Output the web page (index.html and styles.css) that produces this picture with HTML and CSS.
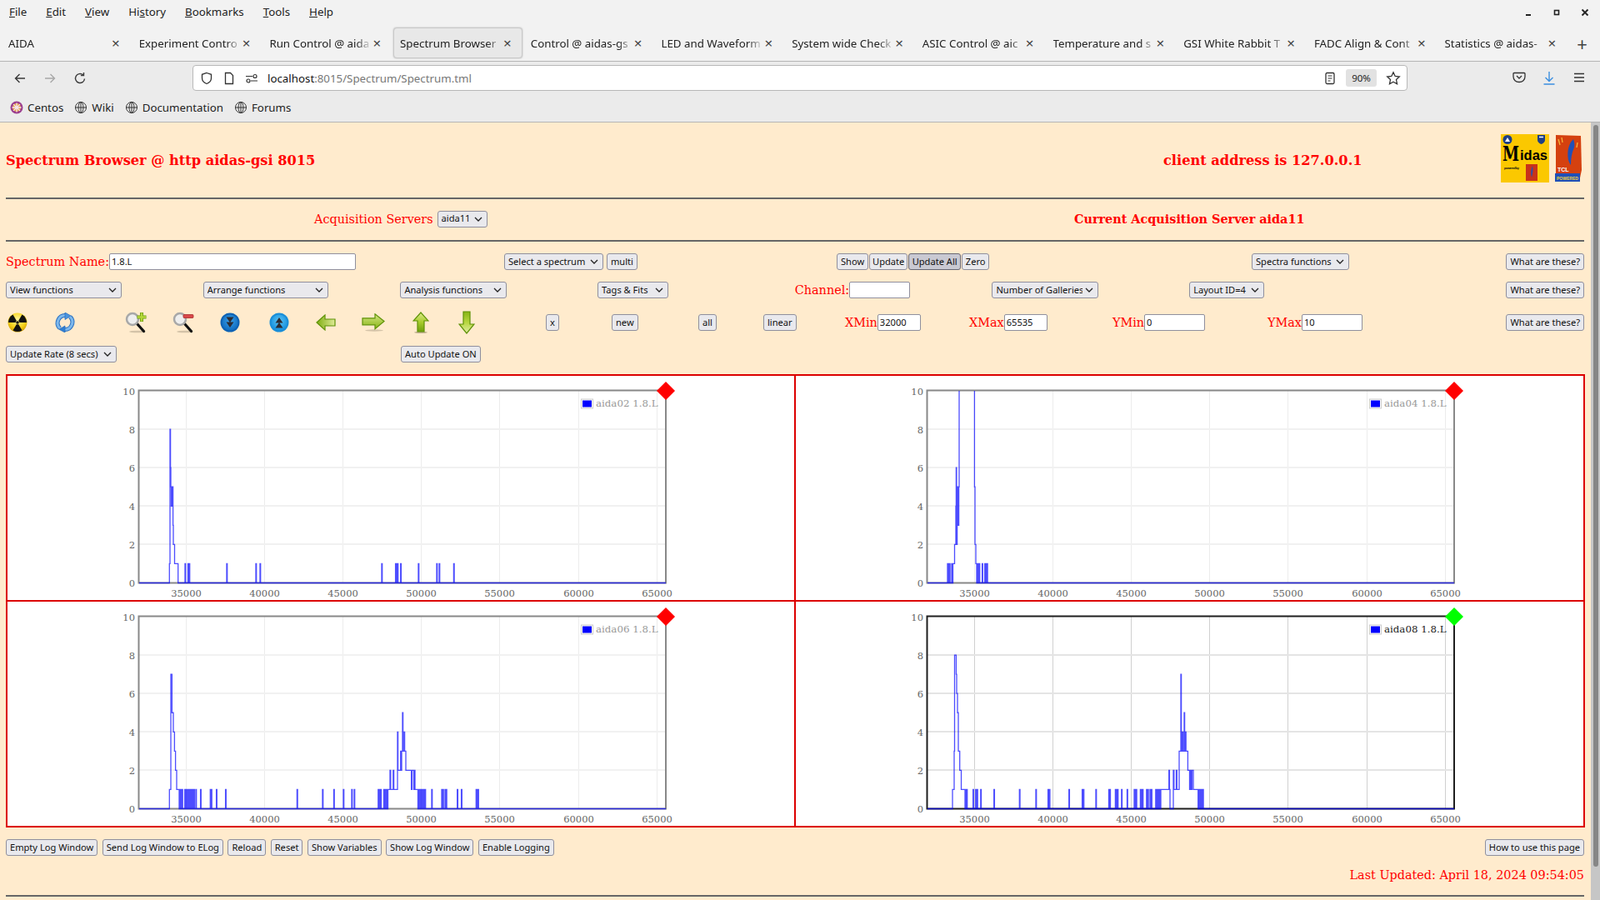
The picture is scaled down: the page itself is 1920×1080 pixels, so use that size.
FILE: index.html
```html
<!DOCTYPE html>
<html lang="en">
<head>
    <meta charset="UTF-8">
    <title>Spectrum Browser @ http aidas-gsi 8015</title>
    <link rel="stylesheet" href="styles.css">
</head>
<body>
    <svg class="defs" width="0" height="0">
        <defs>
            <radialGradient id="nukeGrad" cx="50%" cy="35%" r="70%">
                <stop offset="0" stop-color="#fff6a0"/>
                <stop offset="0.6" stop-color="#f7d21a"/>
                <stop offset="1" stop-color="#c79400"/>
            </radialGradient>
            <linearGradient id="greenGrad" x1="0" y1="0" x2="0" y2="1">
                <stop offset="0" stop-color="#dcea8a"/>
                <stop offset="0.5" stop-color="#a8cc2e"/>
                <stop offset="1" stop-color="#6fa00c"/>
            </linearGradient>
            <linearGradient id="greenDown" x1="0" y1="0" x2="0" y2="1">
                <stop offset="0" stop-color="#86b414"/>
                <stop offset="0.5" stop-color="#b8d640"/>
                <stop offset="1" stop-color="#e2eea4"/>
            </linearGradient>
            <linearGradient id="greenSide" x1="0" y1="0" x2="1" y2="0">
                <stop offset="0" stop-color="#7fae12"/>
                <stop offset="1" stop-color="#dfeb98"/>
            </linearGradient>
            <linearGradient id="greenSideR" x1="0" y1="0" x2="0" y2="1">
                <stop offset="0" stop-color="#d6e684"/>
                <stop offset="1" stop-color="#86b414"/>
            </linearGradient>
            <radialGradient id="blueDark" cx="50%" cy="40%" r="60%">
                <stop offset="0" stop-color="#3aa0e8"/>
                <stop offset="1" stop-color="#0f6cc0"/>
            </radialGradient>
            <radialGradient id="blueLight" cx="50%" cy="40%" r="60%">
                <stop offset="0" stop-color="#5cc4f4"/>
                <stop offset="1" stop-color="#1590de"/>
            </radialGradient>
        </defs>
    </svg>

    <div class="browser">
        <div class="menubar">
            <nav class="menu">
                <span><u>F</u>ile</span>
                <span><u>E</u>dit</span>
                <span><u>V</u>iew</span>
                <span>Hi<u>s</u>tory</span>
                <span><u>B</u>ookmarks</span>
                <span><u>T</u>ools</span>
                <span><u>H</u>elp</span>
            </nav>
            <div class="window-controls">
                <svg width="10" height="10" viewBox="0 0 10 10"><rect x="2" y="7" width="6" height="2" fill="#222"/></svg>
                <svg width="10" height="10" viewBox="0 0 10 10"><rect x="2.5" y="2.5" width="5" height="5" fill="none" stroke="#222" stroke-width="1.6"/></svg>
                <svg width="10" height="10" viewBox="0 0 10 10"><path d="M1.5 1.5l7 7M8.5 1.5l-7 7" stroke="#222" stroke-width="1.8"/></svg>
            </div>
        </div>

        <div class="tabbar">
            <div class="tab"><span class="tab-label">AIDA</span><span class="tab-close">×</span></div>
            <div class="tab"><span class="tab-label">Experiment Contro</span><span class="tab-close">×</span></div>
            <div class="tab"><span class="tab-label">Run Control @ aida</span><span class="tab-close">×</span></div>
            <div class="tab active"><span class="tab-label">Spectrum Browser</span><span class="tab-close">×</span></div>
            <div class="tab"><span class="tab-label">Control @ aidas-gs</span><span class="tab-close">×</span></div>
            <div class="tab"><span class="tab-label">LED and Waveform</span><span class="tab-close">×</span></div>
            <div class="tab"><span class="tab-label">System wide Check</span><span class="tab-close">×</span></div>
            <div class="tab"><span class="tab-label">ASIC Control @ aic</span><span class="tab-close">×</span></div>
            <div class="tab"><span class="tab-label">Temperature and s</span><span class="tab-close">×</span></div>
            <div class="tab"><span class="tab-label">GSI White Rabbit T</span><span class="tab-close">×</span></div>
            <div class="tab"><span class="tab-label">FADC Align &amp; Cont</span><span class="tab-close">×</span></div>
            <div class="tab"><span class="tab-label">Statistics @ aidas-</span><span class="tab-close">×</span></div>
            <span class="tab-new">+</span>
        </div>

        <div class="navbar">
            <div class="nav-buttons">
                <svg width="16" height="16" viewBox="0 0 16 16"><path d="M14 8H2.5M7.5 3l-5 5 5 5" fill="none" stroke="#3a3a3a" stroke-width="1.4"/></svg>
                <svg width="16" height="16" viewBox="0 0 16 16"><path d="M2 8h11.5M8.5 3l5 5-5 5" fill="none" stroke="#a8a8a8" stroke-width="1.4"/></svg>
                <svg width="16" height="16" viewBox="0 0 16 16"><path d="M13.5 8.5A5.5 5.5 0 1 1 11.6 3.8M12.5 1v3.6H8.9" fill="none" stroke="#3a3a3a" stroke-width="1.4"/></svg>
            </div>
            <div class="urlbar">
                <svg class="url-shield" width="16" height="16" viewBox="0 0 16 16"><path d="M8 1.5l5.5 1.8v4.4c0 3.2-2.4 5.6-5.5 6.8-3.1-1.2-5.5-3.6-5.5-6.8V3.300z" fill="none" stroke="#333" stroke-width="1.3"/></svg>
                <svg class="url-page" width="16" height="16" viewBox="0 0 16 16"><path d="M3.500 1.500h6l3 3v10h-9z" fill="none" stroke="#333" stroke-width="1.3"/></svg>
                <svg class="url-perm" width="16" height="16" viewBox="0 0 16 16"><path d="M1 5.500h8M7 11h8" stroke="#333" stroke-width="1.200"/><circle cx="12" cy="5.500" r="2" fill="none" stroke="#333" stroke-width="1.200"/><circle cx="4" cy="11" r="2" fill="none" stroke="#333" stroke-width="1.200"/></svg>
                <span class="url-text"><b>localhost</b>:8015/Spectrum/Spectrum.tml</span>
                <svg class="url-reader" width="14" height="16" viewBox="0 0 14 16"><rect x="2" y="1.500" width="10" height="13" rx="1.500" fill="none" stroke="#333" stroke-width="1.300"/><path d="M4.500 5h5M4.500 8h5M4.500 11h3" stroke="#333" stroke-width="1.200"/></svg>
                <span class="url-zoom">90%</span>
                <svg class="url-star" width="18" height="18" viewBox="0 0 18 18"><path d="M9 1.800l2.200 4.700 5.100.6-3.800 3.500 1 5.100L9 13.200l-4.500 2.500 1-5.100L1.700 7.100l5.100-.6z" fill="none" stroke="#333" stroke-width="1.300"/></svg>
            </div>
            <div class="nav-tools">
                <svg width="16" height="16" viewBox="0 0 16 16"><path d="M2 2.500h12a1 1 0 0 1 1 1v3.500c0 3.800-3 6.500-7 6.500S1 10.800 1 7V3.500a1 1 0 0 1 1-1z" fill="none" stroke="#333" stroke-width="1.300"/><path d="M5 6l3 3 3-3" fill="none" stroke="#333" stroke-width="1.300"/></svg>
                <svg width="16" height="18" viewBox="0 0 16 18"><path d="M8 1v11M3.500 8l4.500 4.500L12.500 8M1.500 16h13" fill="none" stroke="#3b8fe0" stroke-width="1.400"/></svg>
                <svg width="16" height="16" viewBox="0 0 16 16"><path d="M2 3.500h12M2 8h12M2 12.500h12" stroke="#333" stroke-width="1.500"/></svg>
            </div>
        </div>

        <div class="bookmarks">
            <span class="bookmark">
                <svg width="16" height="16" viewBox="0 0 16 16"><circle cx="8" cy="8" r="7.500" fill="#9c3f8e"/><circle cx="8" cy="8" r="5" fill="#e8a24a"/><path d="M8 2.500v11M2.500 8h11M4.100 4.100l7.800 7.800M11.900 4.100l-7.800 7.800" stroke="#f3e6ef" stroke-width="1.300"/></svg>
                Centos
            </span>
            <span class="bookmark">
                <svg class="globe" width="16" height="16" viewBox="0 0 16 16"><circle cx="8" cy="8" r="6.500"/><ellipse cx="8" cy="8" rx="3" ry="6.500"/><path d="M1.500 8h13M8 1.500v13"/></svg>
                Wiki
            </span>
            <span class="bookmark">
                <svg class="globe" width="16" height="16" viewBox="0 0 16 16"><circle cx="8" cy="8" r="6.500"/><ellipse cx="8" cy="8" rx="3" ry="6.500"/><path d="M1.500 8h13M8 1.500v13"/></svg>
                Documentation
            </span>
            <span class="bookmark">
                <svg class="globe" width="16" height="16" viewBox="0 0 16 16"><circle cx="8" cy="8" r="6.500"/><ellipse cx="8" cy="8" rx="3" ry="6.500"/><path d="M1.500 8h13M8 1.500v13"/></svg>
                Forums
            </span>
        </div>
    </div>

    <div class="viewport">
        <main class="page">
            <header class="page-header">
                <h3>Spectrum Browser @ http aidas-gsi 8015</h3>
                <h3>client address is 127.0.0.1</h3>
                <div class="logos">
                    <svg width="58" height="58" viewBox="0 0 58 58">
                        <rect width="58" height="58" fill="#fbc800"/>
                        <circle cx="8" cy="6.500" r="5.500" fill="#1d3f86"/>
                        <path d="M5 9l3-5 3 5z" fill="#fff"/>
                        <path d="M44 1h9v6c0 2.500-2 4-4.500 5C46 11 44 9.500 44 7z" fill="#1d3f86"/>
                        <path d="M46 3.500h5" stroke="#fff" stroke-width="1.500"/>
                        <text class="logo-m" x="2" y="32" textLength="20" lengthAdjust="spacingAndGlyphs">M</text>
                        <text class="logo-idas" x="23" y="31" textLength="33" lengthAdjust="spacingAndGlyphs">idas</text>
                        <text class="logo-small" x="4" y="42" textLength="18">powered by</text>
                        <rect x="30" y="36" width="14" height="20" fill="#c8321a"/>
                        <path d="M38 38c-2 4-2.500 9-1 14 1-4 2-9 1-14z" fill="#2a4da8"/>
                    </svg>
                    <svg width="33" height="58" viewBox="0 0 33 58">
                        <path d="M1 1l30 1 1 41-3 14H1z" fill="#d5410f"/>
                        <path d="M22 6c-5 5-8 13-6 25 1 3 2 5 3 6 0-8 1-14 4-21 1-4 0-7-1-10z" fill="#2050b8"/>
                        <path d="M4 6l2 7M8 4l1 6M27 10l-1 6" stroke="#f4b63c" stroke-width="1.300"/>
                        <text class="logo-tcl" x="3" y="45">TCL</text>
                        <rect x="0" y="47" width="30" height="10" fill="#2050b8"/>
                        <text class="logo-powered" x="2" y="55" textLength="26" lengthAdjust="spacingAndGlyphs">POWERED</text>
                    </svg>
                </div>
            </header>
            <hr>
            <section class="servers">
                <div class="field">
                    <span class="red-label">Acquisition Servers</span>
                    <select class="control" id="serverSelect"><option>aida11</option></select>
                </div>
                <h4>Current Acquisition Server aida11</h4>
            </section>
            <hr>

            <section class="row row-spectrum">
                <div class="field">
                    <label class="red-label" for="spectrumName">Spectrum Name:</label>
                    <input class="control" id="spectrumName" type="text" value="1.8.L">
                </div>
                <div class="button-group">
                    <select class="control" id="spectrumSelect"><option>Select a spectrum</option></select>
                    <button class="control">multi</button>
                </div>
                <div class="button-group tight">
                    <button class="control">Show</button>
                    <button class="control" id="btnUpdate">Update</button>
                    <button class="control pressed" id="btnUpdateAll">Update All</button>
                    <button class="control" id="btnZero">Zero</button>
                </div>
                <select class="control" id="spectraFunctions"><option>Spectra functions</option></select>
                <button class="control at-end">What are these?</button>
            </section>

            <section class="row row-functions">
                <select class="control" id="viewFunctions"><option>View functions</option></select>
                <select class="control" id="arrangeFunctions"><option>Arrange functions</option></select>
                <select class="control" id="analysisFunctions"><option>Analysis functions</option></select>
                <select class="control" id="tagsFits"><option>Tags &amp; Fits</option></select>
                <div class="field">
                    <label class="red-label" for="channel">Channel:</label>
                    <input class="control" id="channel" type="text">
                </div>
                <select class="control" id="galleries"><option>Number of Galleries</option></select>
                <select class="control" id="layoutId"><option>Layout ID=4</option></select>
                <button class="control at-end">What are these?</button>
            </section>

            <section class="row row-tools">
                <svg class="icon" width="24" height="24" viewBox="0 0 24 24">
                    <circle cx="12" cy="12" r="11.500" fill="url(#nukeGrad)"/>
                    <path d="M13.250 14.170L17.500 21.530A11 11 0 0 1 6.500 21.530L10.750 14.170Z" fill="#111"/>
                    <path d="M13.250 14.170L17.500 21.530A11 11 0 0 1 6.500 21.530L10.750 14.170Z" fill="#111" transform="rotate(120 12 12)"/>
                    <path d="M13.250 14.170L17.500 21.530A11 11 0 0 1 6.500 21.530L10.750 14.170Z" fill="#111" transform="rotate(240 12 12)"/>
                    <circle cx="12" cy="12" r="1.800" fill="#111"/>
                </svg>
                <svg class="icon" width="26" height="24" viewBox="0 0 26 24">
                    <path d="M7 19A9 9 0 0 1 14 3.500" fill="none" stroke="#2a6fc0" stroke-width="5"/>
                    <path d="M7 19A9 9 0 0 1 14 3.500" fill="none" stroke="#7db8ec" stroke-width="3"/>
                    <path d="M13 0l7 4-7 4.500z" fill="#4a94de" stroke="#2a6fc0" stroke-width=".8"/>
                    <path d="M19 5A9 9 0 0 1 12 20.500" fill="none" stroke="#2a6fc0" stroke-width="5"/>
                    <path d="M19 5A9 9 0 0 1 12 20.500" fill="none" stroke="#7db8ec" stroke-width="3"/>
                    <path d="M13 16l-7 4.300 7 3.700z" fill="#2f7fd2" stroke="#2a6fc0" stroke-width=".8"/>
                </svg>
                <svg class="icon" width="26" height="26" viewBox="0 0 26 26">
                    <ellipse cx="15" cy="24" rx="10" ry="1.300" fill="#b8a890" opacity=".6"/>
                    <path d="M14.500 14.500l8 9" stroke="#111" stroke-width="3.200" stroke-linecap="round"/>
                    <circle cx="9" cy="9" r="7" fill="#eee" stroke="#a8a8a8" stroke-width="2.500"/>
                    <path d="M20 1v11M14.500 6.500h11" stroke="#6a9a10" stroke-width="4"/>
                    <path d="M20 1.500v10M15 6.500h10" stroke="#b4d638" stroke-width="2.400"/>
                </svg>
                <svg class="icon" width="26" height="26" viewBox="0 0 26 26">
                    <ellipse cx="15" cy="24" rx="10" ry="1.300" fill="#b8a890" opacity=".6"/>
                    <path d="M14.500 14.500l8 9" stroke="#111" stroke-width="3.200" stroke-linecap="round"/>
                    <circle cx="9" cy="9" r="7" fill="#eee" stroke="#a8a8a8" stroke-width="2.500"/>
                    <rect x="13" y="3.500" width="12" height="4" rx="1" fill="#d9484a" stroke="#a82c2c" stroke-width=".8"/>
                </svg>
                <svg class="icon" width="24" height="24" viewBox="0 0 24 24">
                    <circle cx="12" cy="12" r="11.500" fill="#0e62b4"/>
                    <circle cx="12" cy="12" r="9.500" fill="url(#blueDark)"/>
                    <path d="M7.500 5.500h9L12 12zM7.500 11.500h9L12 18z" fill="#2c2c34"/>
                </svg>
                <svg class="icon" width="24" height="24" viewBox="0 0 24 24">
                    <circle cx="12" cy="12" r="11.500" fill="#1a8ed8"/>
                    <circle cx="12" cy="12" r="9.500" fill="url(#blueLight)"/>
                    <path d="M7.500 18.500h9L12 12zM7.500 12.500h9L12 6z" fill="#2c2c34"/>
                </svg>
                <svg class="icon" width="24" height="20" viewBox="0 0 24 20">
                    <path d="M1 10L11 1v5h12v8H11v5z" fill="url(#greenSide)" stroke="#5f9208" stroke-width="1.200"/>
                </svg>
                <svg class="icon" width="28" height="22" viewBox="0 0 28 22">
                    <ellipse cx="15" cy="20.500" rx="11" ry="1.200" fill="#b8a890" opacity=".6"/>
                    <path d="M27 9.500L16 .8v5H1v8h15v5z" fill="url(#greenSideR)" stroke="#5f9208" stroke-width="1.200"/>
                </svg>
                <svg class="icon" width="20" height="26" viewBox="0 0 20 26">
                    <ellipse cx="10" cy="24.800" rx="8" ry="1.200" fill="#a89878" opacity=".7"/>
                    <path d="M10 1L19 11h-5v13H6V11H1z" fill="url(#greenGrad)" stroke="#5f9208" stroke-width="1.200"/>
                </svg>
                <svg class="icon" width="20" height="28" viewBox="0 0 20 28">
                    <path d="M10 27L1 16h5V1h8v15h5z" fill="url(#greenDown)" stroke="#5f9208" stroke-width="1.200"/>
                </svg>
                <button class="control">x</button>
                <button class="control">new</button>
                <button class="control">all</button>
                <button class="control">linear</button>
                <div class="field">
                    <label class="red-label" for="xMin">XMin</label>
                    <input class="control short" id="xMin" type="text" value="32000">
                </div>
                <div class="field">
                    <label class="red-label" for="xMax">XMax</label>
                    <input class="control short" id="xMax" type="text" value="65535">
                </div>
                <div class="field">
                    <label class="red-label" for="yMin">YMin</label>
                    <input class="control medium" id="yMin" type="text" value="0">
                </div>
                <div class="field">
                    <label class="red-label" for="yMax">YMax</label>
                    <input class="control medium" id="yMax" type="text" value="10">
                </div>
                <button class="control at-end">What are these?</button>
            </section>

            <section class="row row-update">
                <select class="control" id="updateRate"><option>Update Rate (8 secs)</option></select>
                <button class="control">Auto Update ON</button>
            </section>

            <section class="plots" id="plots"></section>

            <section class="log-buttons">
                <div class="button-group wide">
                    <button class="control">Empty Log Window</button>
                    <button class="control">Send Log Window to ELog</button>
                    <button class="control">Reload</button>
                    <button class="control">Reset</button>
                    <button class="control">Show Variables</button>
                    <button class="control">Show Log Window</button>
                    <button class="control">Enable Logging</button>
                </div>
                <button class="control">How to use this page</button>
            </section>

            <p class="last-updated">Last Updated: April 18, 2024 09:54:05</p>
            <hr>
        </main>
        <div class="scrollbar"><div class="scroll-thumb"></div></div>
    </div>

    <script src="plots.js"></script>
</body>
</html>
```

FILE: styles.css
```css
* {
    box-sizing: border-box;
}

html, body {
    margin: 0;
    height: 1080px;
    overflow: hidden;
}

body {
    font-family: 'Noto Sans', sans-serif;
    background-color: #ffebcd;
}

.defs {
    display: block;
}

/* browser chrome */
.browser {
    color: #222;
    font-size: 13.3px;
}

.menubar {
    height: 30px;
    background: #f2f2f2;
    display: flex;
    justify-content: space-between;
    align-items: center;
}

.menu {
    display: flex;
    padding: 0 0 2px 11px;
    gap: 23px;
}

.window-controls {
    display: flex;
    gap: 24px;
    padding-right: 13px;
}

.tabbar {
    height: 44px;
    background: #f2f2f2;
    border-bottom: 1px solid #b5b5b5;
    display: flex;
    align-items: center;
    padding-left: 2px;
    gap: 1.7px;
}

.tab {
    width: 155px;
    height: 37px;
    display: flex;
    align-items: center;
    padding: 0 7px;
    border: 1px solid transparent;
    border-radius: 4px;
}

.tab.active {
    background: #e8e8e8;
    border-color: #c8c8c8;
    box-shadow: 0 0 2px rgba(0, 0, 0, 0.25);
}

.tab-label {
    width: 123px;
    white-space: nowrap;
    overflow: hidden;
    -webkit-mask-image: linear-gradient(to right, #000 85%, transparent 100%);
    mask-image: linear-gradient(to right, #000 85%, transparent 100%);
}

.tab-close {
    font-size: 17px;
    line-height: 1;
    color: #444;
    margin-left: 1px;
}

.tab-new {
    font-size: 22px;
    color: #444;
    margin-left: 10px;
    line-height: 1;
}

.navbar {
    height: 36px;
    padding-top: 3px;
    background: #ebebeb;
    display: flex;
    align-items: center;
}

.nav-buttons {
    width: 231px;
    display: flex;
    gap: 20px;
    padding-left: 16px;
}

.urlbar {
    width: 1458px;
    height: 31px;
    background: #fff;
    border: 1px solid #b8b8b8;
    border-radius: 4px;
    display: flex;
    align-items: center;
    padding-left: 8px;
}

.url-page,
.url-perm {
    margin-left: 11px;
}

.url-text {
    margin-left: 11px;
    width: 1268px;
    color: #777;
}

.url-text b {
    font-weight: 400;
    color: #111;
}

.url-zoom {
    margin-left: 12px;
    width: 37px;
    height: 21px;
    line-height: 21px;
    background: #e2e2e2;
    border-radius: 3px;
    text-align: center;
    font-size: 11.5px;
}

.url-star {
    margin-left: 11px;
}

.nav-tools {
    display: flex;
    gap: 20px;
    padding-left: 126px;
}

.bookmarks {
    height: 37px;
    padding: 2px 0 0 12px;
    background: #ebebeb;
    border-bottom: 1px solid #b5b5b5;
    display: flex;
    align-items: center;
    gap: 13px;
}

.bookmark {
    display: flex;
    align-items: center;
    gap: 5px;
}

.globe {
    fill: none;
    stroke: #333;
    stroke-width: 1;
}

/* page */
.viewport {
    display: flex;
    height: 933px;
}

.page {
    width: 1909px;
    padding: 0 8px 0 7px;
    overflow: hidden;
}

.scrollbar {
    width: 11px;
    background: #c6c6c6;
    padding: 3px 2px 0 3px;
}

.scroll-thumb {
    height: 890px;
    background: #868686;
    border-radius: 3px;
}

hr {
    margin: 0;
    border: 0;
    height: 2px;
    background: #666;
}

h3, h4 {
    margin: 0;
    color: #f00;
    font-family: 'DejaVu Serif', serif;
    font-weight: bold;
}

h3 {
    font-size: 16.2px;
}

h4 {
    font-size: 14.4px;
}

.page-header {
    height: 90px;
    display: grid;
    grid-template-columns: 1389px 405px 1fr;
    align-items: center;
}

.logos {
    display: flex;
    gap: 7px;
    margin-bottom: 4px;
}

.logo-m {
    font: bold 25px 'DejaVu Serif', serif;
    fill: #000;
}

.logo-idas {
    font: bold 16px 'Liberation Sans', sans-serif;
    fill: #000;
}

.logo-small {
    font: bold 4px 'Liberation Sans', sans-serif;
    fill: #111;
}

.logo-tcl {
    font: bold 7px 'Liberation Sans', sans-serif;
    fill: #fff;
}

.logo-powered {
    font: bold 6px 'Liberation Sans', sans-serif;
    fill: #f2d23c;
}

.servers {
    height: 49px;
    padding: 0 0 2px 370px;
    display: grid;
    grid-template-columns: 912px 1fr;
    align-items: center;
}

.field {
    display: flex;
    align-items: center;
}

.red-label {
    color: #f00;
    font-family: 'DejaVu Serif', serif;
    font-size: 14.4px;
    white-space: nowrap;
}

.control {
    height: 20px;
    font-family: 'Noto Sans', sans-serif;
    font-size: 11.1px;
    color: #111;
    background-color: #e9e9ed;
    border: 1px solid #8f8f9d;
    border-radius: 3px;
    padding: 0 4px 2px;
    margin: 0;
    white-space: nowrap;
}

input.control {
    background-color: #fff;
    padding: 0 2px 2px;
    border-radius: 2px;
}

select.control {
    appearance: none;
    -webkit-appearance: none;
    padding-right: 18px;
    background-image: url("data:image/svg+xml,%3Csvg xmlns='http://www.w3.org/2000/svg' width='10' height='6'%3E%3Cpath d='M1 1l4 4 4-4' fill='none' stroke='%23222' stroke-width='1.300'/%3E%3C/svg%3E");
    background-repeat: no-repeat;
    background-position: right 5px center;
}

button.pressed {
    background-color: #c9c9d2;
    border-color: #676774;
}

.row {
    display: grid;
    align-items: center;
    grid-template-rows: 20px;
    height: 20px;
    margin-top: 14px;
}

.row > select,
.row > button {
    justify-self: start;
}

.row > .at-end {
    justify-self: end;
}

.row-spectrum {
    grid-template-columns: 598px 399px 498px 119px 1fr;
}

.row-functions {
    grid-template-columns: repeat(7, 236.7px) 1fr;
}

.row-tools {
    margin-top: 19px;
    padding-left: 2px;
    grid-template-columns: 56px 85px 57px 57px 59px 56px 55px 61px 55px 105px 79px 104px 78px 98px 149px 172px 186px 285px 1fr;
}

.row-update {
    margin-top: 18px;
    grid-template-columns: 474px 1fr;
}

.button-group {
    display: flex;
    gap: 4px;
}

.button-group.tight {
    gap: 1px;
}

.button-group.wide {
    gap: 5.5px;
}

#serverSelect { width: 60px; margin-left: 5px; }
#spectrumSelect { width: 119px; }
#spectrumName { width: 296px; }
#spectraFunctions { width: 117px; }
#viewFunctions { width: 139px; }
#arrangeFunctions { width: 150px; }
#analysisFunctions { width: 128px; }
#tagsFits { width: 85px; }
#channel { width: 73px; }
#galleries { width: 128px; }
#layoutId { width: 90px; }
#updateRate { width: 133px; }
#btnUpdate { width: 46px; padding: 0 0 2px; }
#btnUpdateAll { width: 63px; padding: 0 0 2px; }
#btnZero { width: 33px; padding: 0 0 2px; }

input.short { width: 52px; }
input.medium { width: 73px; }

/* plots */
.plots {
    margin-top: 14px;
    width: 1895px;
    height: 544px;
    background: #dc0000;
    padding: 2px;
    display: grid;
    grid-template-columns: 944px 945px;
    grid-template-rows: 269px 269px;
    gap: 2px;
}

.plot {
    background: #fff;
}

.plot svg {
    display: block;
}

.plot text {
    font-family: 'DejaVu Serif', serif;
    font-size: 11.5px;
    fill: #666;
}

.plot .legend-text {
    font-size: 11.8px;
    fill: #999;
}

.plot.active .legend-text {
    fill: #222;
}

.grid-v {
    stroke: #ececec;
    stroke-width: 1;
}

.grid-h {
    stroke: #f1f1f1;
    stroke-width: 2;
}

.axes {
    fill: none;
    stroke: #888;
    stroke-width: 2;
}

.plot.active .grid-v {
    stroke: #d0d0d0;
}

.plot.active .grid-h {
    stroke: #e4e4e4;
}

.plot.active .axes {
    stroke: #1e1e1e;
}

.trace {
    fill: none;
    stroke: #00f;
    stroke-opacity: 0.7;
    stroke-width: 1.3;
}

.log-buttons {
    margin-top: 14px;
    display: flex;
    justify-content: space-between;
}

.last-updated {
    margin: 0;
    height: 47px;
    padding-top: 15px;
    text-align: right;
    color: #f00;
    font-family: 'DejaVu Serif', serif;
    font-size: 14.4px;
}
```

FILE: plots.js
```js
// x positions are in pixels from the left edge of each plot cell
const TOP_Y = 18;
const ZERO_Y = 248.5;

function spikes(xs) {
    return xs.flatMap(x => [[x, 1], [x + 0.7, 0]]);
}

const plots = [
    {
        name: 'aida02', status: 'red',
        steps: [
            [194.3, 1], [195, 8], [195.6, 6], [196, 5], [196.5, 4], [197, 5], [197.5, 4], [198, 5],
            [198.6, 3], [199, 2], [200.5, 1], [204.7, 0],
            ...spikes([213, 216.5, 217.3, 218, 263, 298, 303, 449, 465.6, 466.4, 467.2, 468, 471.7, 493, 515, 518, 535.4])
        ]
    },
    {
        name: 'aida04', status: 'red',
        steps: [
            ...spikes([181, 182.2, 183.4, 186]),
            [187.5, 1], [189.5, 2], [191, 4], [191.4, 6], [191.9, 3], [192.3, 2], [192.6, 5], [193, 3],
            [193.5, 5], [194, 3], [194.6, 5], [195, 12], [213.4, 12], [213.4, 5], [214, 2], [215, 1], [216, 0],
            ...spikes([216.6, 217.4, 218.2, 219, 222.6, 225.7, 226.6, 227.6, 228.4])
        ]
    },
    {
        name: 'aida06', status: 'red',
        steps: [
            [194.3, 1], [196, 7], [197.4, 5], [199, 4], [200.4, 3], [201.6, 2], [203, 1], [206, 0],
            ...spikes([206.5, 207.5, 208.5, 209.5, 212.7, 214, 215.2, 216.2, 217.2, 218.2, 219.5, 221, 222, 223.7, 226, 231.6,
                243.3, 244.5, 250.6, 261.6, 347.4, 378, 391.5, 403, 413, 416, 444.8, 446, 447.8, 451.5, 453, 455]),
            [456.5, 1], [459, 2], [459.8, 1], [462.8, 2], [463.6, 1], [468, 4], [468.6, 2], [471.7, 3], [472.4, 2],
            [473, 3], [474, 5], [474.6, 3], [476, 4], [476.6, 3], [478, 2], [484.6, 1], [485.4, 2], [487.5, 1],
            [488.4, 2], [489, 1], [492.5, 0],
            ...spikes([493, 494, 495, 496, 497, 498, 499, 500, 501, 509, 521, 522.5, 525, 526.4, 539.7, 544.6, 562.3, 563.5, 564.6])
        ]
    },
    {
        name: 'aida08', status: 'green',
        steps: [
            [187, 1], [189, 3], [189.5, 8], [191.4, 7], [192, 6], [193, 5], [194, 3], [195.7, 2], [197.5, 1], [202, 0],
            ...spikes([202.4, 203.2, 204, 211.6, 214.7, 215.5, 216.5, 220.8, 236.7, 267.3, 287, 301.6, 303.2, 326.7, 342.6, 344,
                359, 374.5, 375.8, 382.4, 383.6, 385, 389.8, 396.5, 405, 406.2, 407.4, 412.4, 413.6, 415, 419.8, 421.4,
                424, 425.6, 430.8, 432.4, 434, 435.4]),
            [437, 1], [446.7, 2], [447.4, 1], [448, 0], [452, 1], [452, 2], [452.8, 1], [455.5, 2], [456.3, 1],
            [459, 3], [461, 7], [461.6, 4], [462.2, 3], [463, 4], [463.6, 3], [465, 5], [465.6, 3], [466.4, 4],
            [467.2, 3], [469.4, 2], [471.5, 1], [472.4, 2], [473.5, 1], [474.4, 2], [476, 1], [481.7, 0],
            ...spikes([482.4, 483.4, 484.4, 485.4, 486.4, 487.4])
        ]
    }
];

function yOf(value) {
    return ZERO_Y - value * (ZERO_Y - TOP_Y) / 10;
}

function renderPlot(plot, index) {
    const xTicks = [35000, 40000, 45000, 50000, 55000, 60000, 65000];
    const tickX = value => Math.floor(214 + (value - 35000) * 94.2 / 5000) + 0.5;
    const traceShift = index % 2;

    const gridV = xTicks.map(v => `<line class="grid-v" x1="${tickX(v)}" x2="${tickX(v)}" y1="${TOP_Y}" y2="${ZERO_Y}"/>`).join('');
    const gridH = [2, 4, 6, 8].map(v => `<line class="grid-h" x1="157" x2="790" y1="${Math.round(yOf(v))}" y2="${Math.round(yOf(v))}"/>`).join('');
    const xLabels = xTicks.map(v => `<text x="${tickX(v)}" y="264.5" text-anchor="middle">${v}</text>`).join('');
    const yLabels = [0, 2, 4, 6, 8, 10].map(v => `<text x="153" y="${yOf(v) + 4.5}" text-anchor="end">${v}</text>`).join('');

    let line = `M158 ${yOf(0)}`;
    plot.steps.forEach(([x, v]) => {
        line += `H${x + traceShift}V${yOf(v)}`;
    });
    line += 'H790';

    const colour = plot.status === 'green' ? '#0f0' : '#f00';
    return `
        <div class="plot ${plot.status === 'green' ? 'active' : ''}">
            <svg width="${index % 2 ? 945 : 944}" height="269">
                <clipPath id="clip${index}"><rect x="157" y="${TOP_Y}" width="633" height="232"/></clipPath>
                ${gridV}${gridH}
                <rect class="axes" x="157.5" y="17.5" width="632.5" height="231"/>
                <path class="trace" d="${line}" clip-path="url(#clip${index})"/>
                ${xLabels}${yLabels}
                <rect x="688.5" y="28" width="14" height="11" fill="#fff" stroke="#ccc"/>
                <rect x="690" y="29.5" width="11" height="8" fill="#00f"/>
                <text class="legend-text" x="706" y="37">${plot.name} 1.8.L</text>
                <path d="M790 7L801 18 790 29 779 18z" fill="${colour}"/>
            </svg>
        </div>`;
}

document.getElementById('plots').innerHTML = plots.map(renderPlot).join('');
```
